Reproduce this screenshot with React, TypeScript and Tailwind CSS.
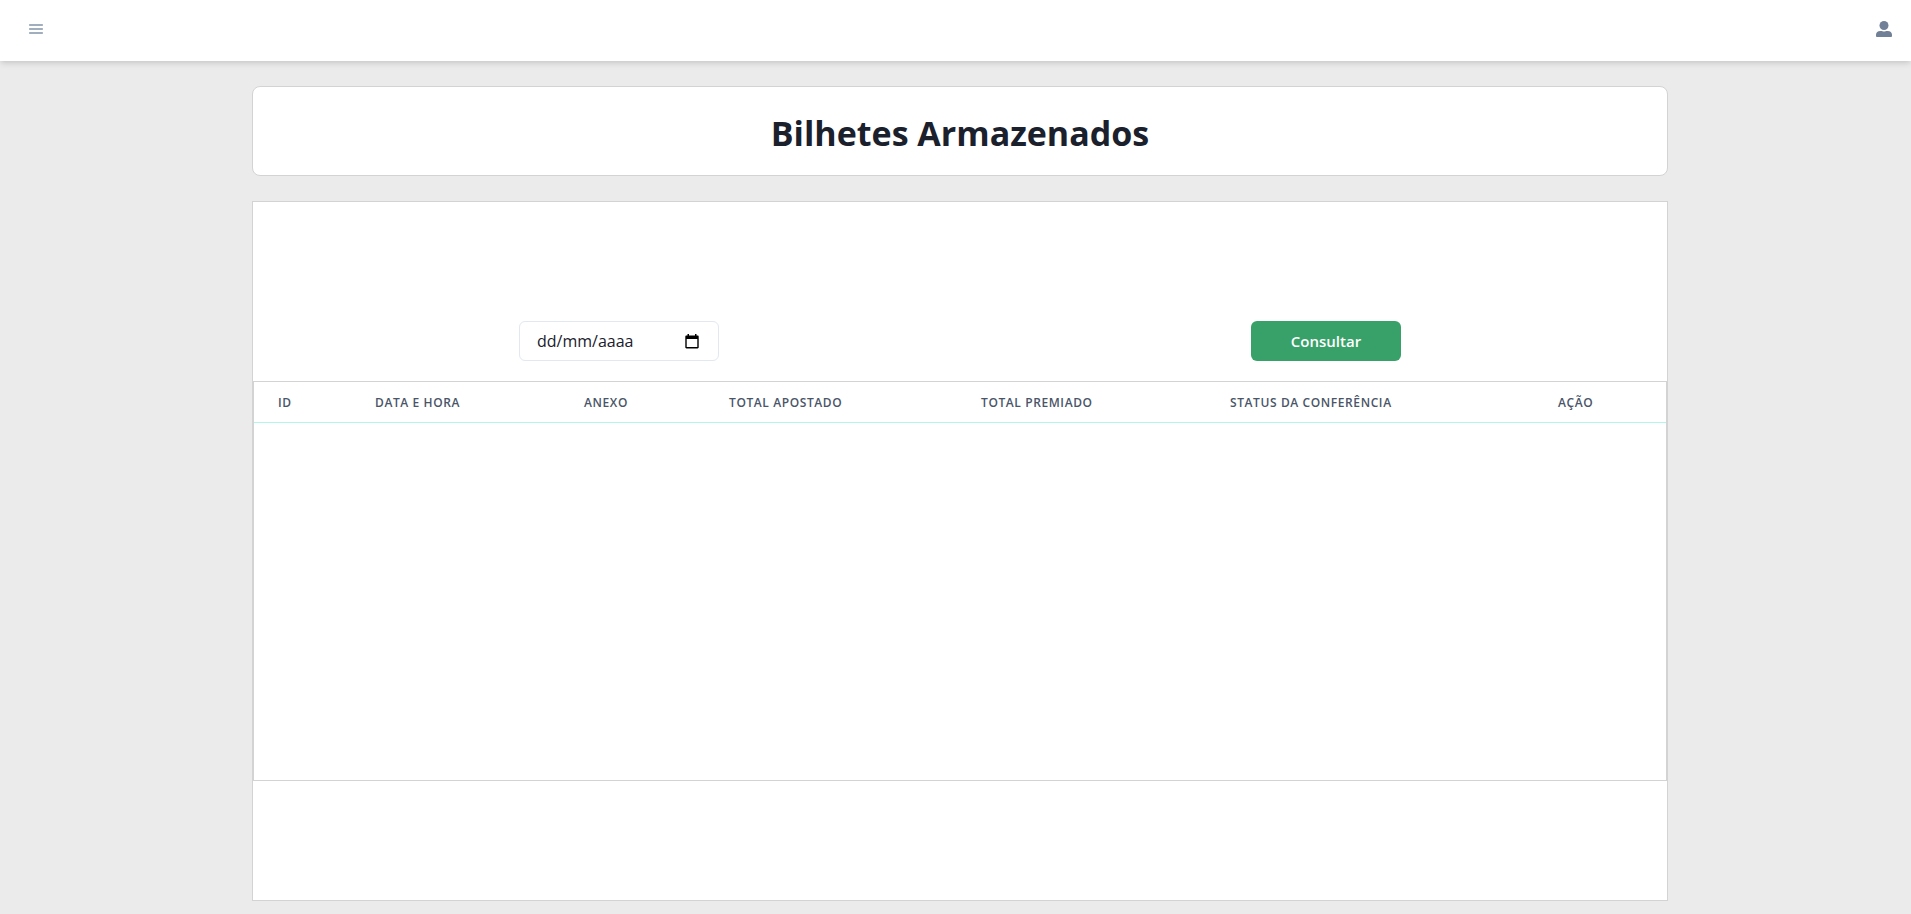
const columns = [
  { label: 'ID', width: 'w-[97px]' },
  { label: 'Data e hora', width: 'w-[209px]' },
  { label: 'Anexo', width: 'w-[145px]' },
  { label: 'Total apostado', width: 'w-[252px]' },
  { label: 'Total premiado', width: 'w-[249px]' },
  { label: 'Status da conferência', width: 'w-[328px]' },
  { label: 'Ação', width: 'w-[132px]' },
];

function MenuIcon() {
  return (
    <svg viewBox="0 0 14 10" className="h-2.5 w-3.5" fill="currentColor" aria-hidden="true">
      <rect width="14" height="2" rx="0.7" />
      <rect y="4" width="14" height="2" rx="0.7" />
      <rect y="8" width="14" height="2" rx="0.7" />
    </svg>
  );
}

function UserIcon() {
  return (
    <svg viewBox="0 0 16 16" className="size-4" fill="currentColor" aria-hidden="true">
      <circle cx="8" cy="4.5" r="4.5" />
      <path d="M4.2 10H6c1.200.7 2.800.7 4 0h1.800C14.300 10 16 11.500 16 13.700v1.100c0 .8-.4 1.200-1.200 1.200H1.200C.4 16 0 15.600 0 14.800v-1.100C0 11.500 1.700 10 4.200 10z" />
    </svg>
  );
}

function CalendarIcon() {
  return (
    <svg viewBox="0 0 14 15" className="h-[15px] w-3.5" aria-hidden="true">
      <path fill="currentColor" fillRule="evenodd" d="M2.500 0H4v1.500h6V0h1.500v1.500H12.500c.8 0 1.200.5 1.200 1.200v10.600c0 .7-.4 1.200-1.200 1.200h-11C.8 14.500.3 14 .3 13.300V2.700c0-.7.5-1.200 1.200-1.200h1zM1.700 5v8.100h10.600V5z" />
    </svg>
  );
}

function Header() {
  return (
    <header className="relative flex h-[61px] items-start justify-between bg-white px-[19px] pt-[19px] shadow-[0_4px_6px_-1px_rgba(0,0,0,0.1),0_2px_4px_-1px_rgba(0,0,0,0.06)]">
      <button type="button" aria-label="Abrir menu" className="flex h-5 w-[34px] items-center justify-center text-[#a0aec0]">
        <MenuIcon />
      </button>
      <button type="button" aria-label="Conta" className="flex h-5 w-4 items-center justify-center text-[#718096]">
        <UserIcon />
      </button>
    </header>
  );
}

export default function App() {
  return (
    <div className="min-h-screen bg-[#ebebeb] font-['Open_Sans','Noto_Sans',sans-serif] text-[#1a202c]">
      <Header />
      <main className="pt-[25px] pb-[13px] pl-[9px]">
        <div className="mx-auto flex max-w-[1416px] flex-col gap-[25px]">
          <section className="flex h-[90px] items-center justify-center rounded-lg border border-[#d3d3d3] bg-white pt-1">
            <h1 className="text-[34px] leading-[42px] font-bold">Bilhetes Armazenados</h1>
          </section>

          <section className="flex h-[700px] flex-col justify-center border border-[#d3d3d3] bg-white">
            <form className="mb-5 flex justify-around" onSubmit={(event) => event.preventDefault()}>
              <div className="flex h-10 w-[200px] items-center rounded-md border border-[#e2e8f0] pr-[19px] pl-[17px]">
                <input
                  type="text"
                  inputMode="numeric"
                  aria-label="Data"
                  placeholder="dd/mm/aaaa"
                  className="min-w-0 flex-1 bg-transparent text-base leading-6 outline-none placeholder:text-[#1a202c] placeholder:opacity-100"
                />
                <button type="button" aria-label="Abrir calendário" className="text-black">
                  <CalendarIcon />
                </button>
              </div>
              <button type="submit" className="h-10 w-[150px] rounded-md bg-[#38a169] text-[15px] leading-5 font-semibold text-white">
                Consultar
              </button>
            </form>

            <div className="h-[400px] overflow-auto border border-[#d3d3d3]">
              <table className="w-full table-fixed border-collapse">
                <thead>
                  <tr>
                    {columns.map((column) => (
                      <th
                        key={column.label}
                        scope="col"
                        className={`${column.width} border-b border-[#b2f5ea] px-6 pt-[13px] pb-[11px] text-left text-xs leading-4 font-semibold tracking-wider whitespace-nowrap text-[#4a5568] uppercase`}
                      >
                        {column.label}
                      </th>
                    ))}
                  </tr>
                </thead>
                <tbody />
              </table>
            </div>
          </section>
        </div>
      </main>
    </div>
  );
}
